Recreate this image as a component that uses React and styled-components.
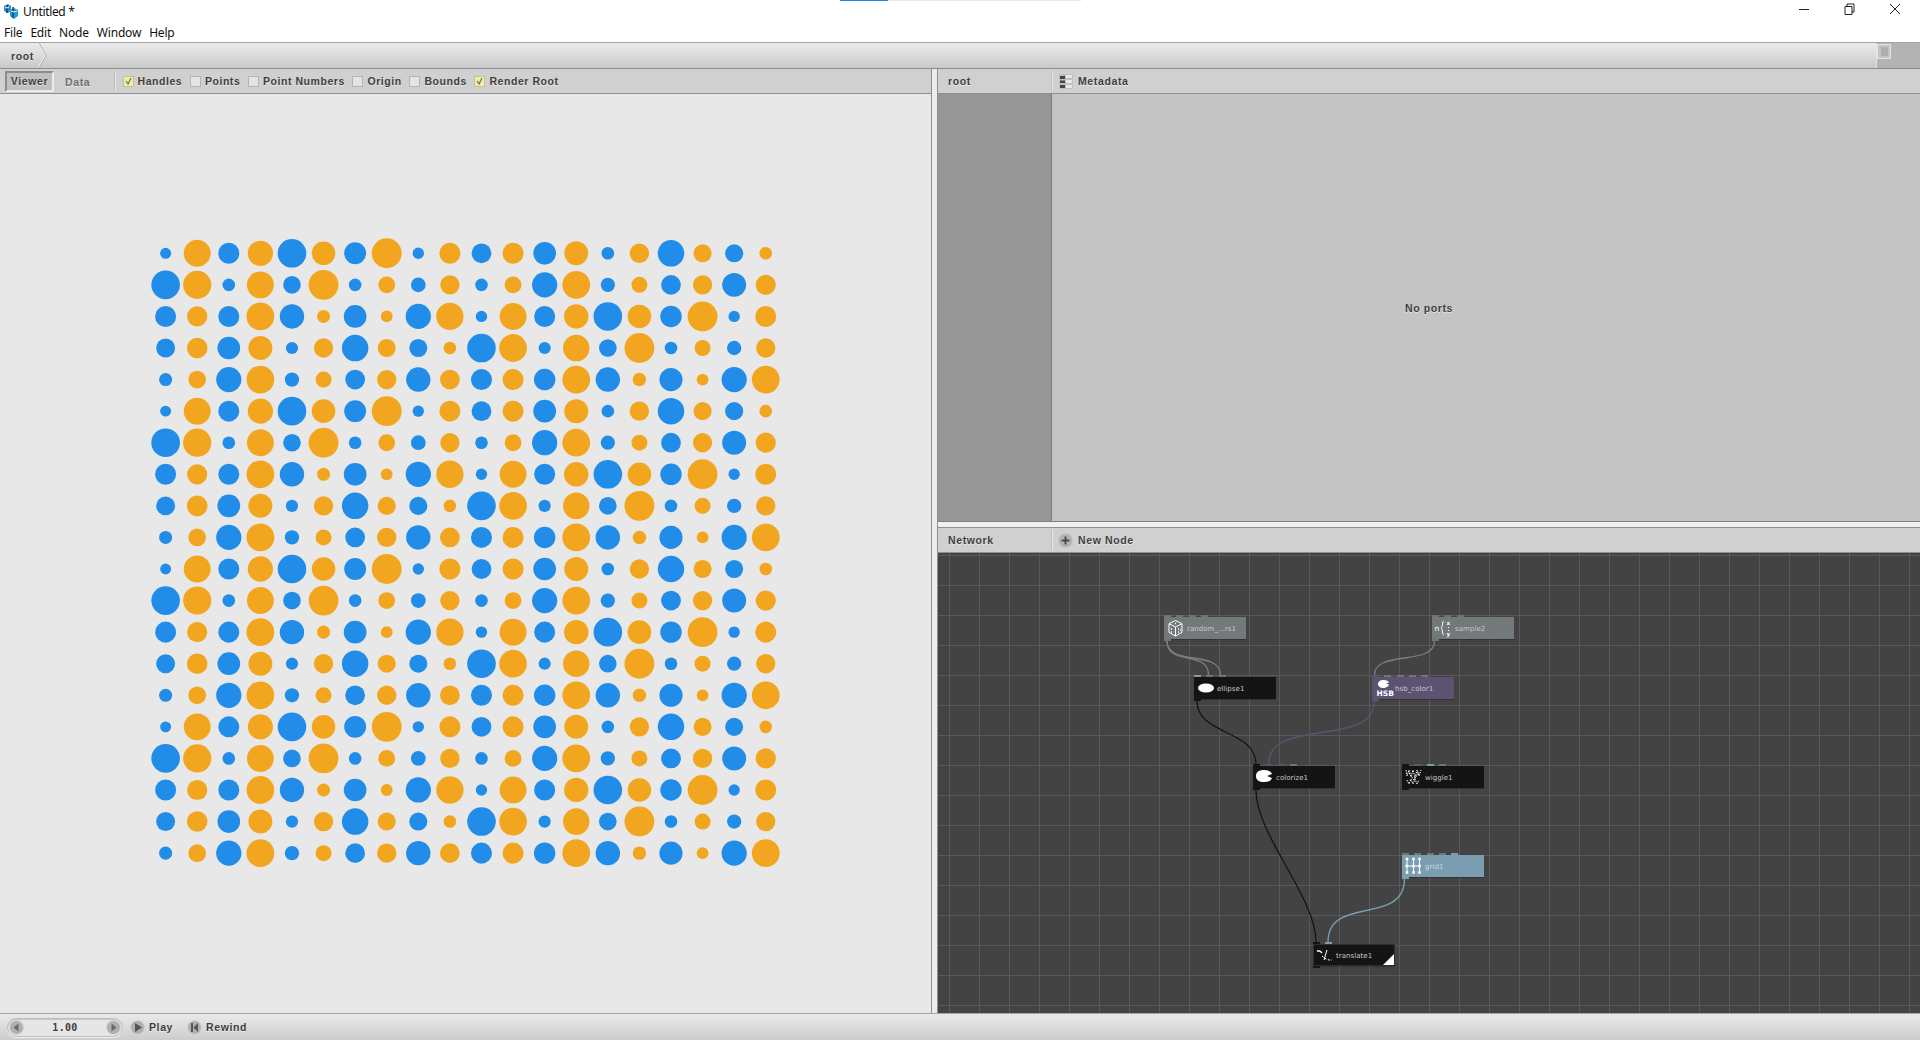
import React from "react";
import styled, { createGlobalStyle } from "styled-components";

const Global = createGlobalStyle`
  html, body { margin: 0; padding: 0; background: #fff; overflow: hidden; }
  #root { width: 1920px; height: 1040px; }
  * { box-sizing: border-box; }
`;

const UI = `"Liberation Sans", Arial, sans-serif`;
const BLUE = "#218de9";
const ORANGE = "#f2a620";

const Shell = styled.div`
  position: relative; width: 1920px; height: 1040px; display: flex; flex-direction: column;
  font-family: ${UI}; overflow: hidden;
`;
const LoadBar = styled.div`
  position: absolute; top: 0; left: 840px; width: 241px; height: 1px;
  background: linear-gradient(to right, #1e88e0 0 48px, #e8e8e8 48px);
`;
const TitleBar = styled.div`
  height: 22px; display: flex; align-items: center; background: #fff; padding-left: 3px; flex: none;
`;
const TitleText = styled.span`
  margin-left: 4px; font: 12px "Noto Sans", sans-serif; letter-spacing: -0.35px; color: #111;
`;
const WinButtons = styled.div`
  margin-left: auto; display: flex; align-items: center; padding-right: 3px; height: 21px; margin-top: -4px;
`;
const WinButton = styled.svg`
  width: 45px; height: 12px; display: block;
`;
const MenuBar = styled.div`
  height: 20px; display: flex; align-items: center; gap: 8px; background: #fff; padding: 1px 0 0 4px; flex: none;
`;
const MenuItem = styled.span`
  font: 12px "Noto Sans", sans-serif; letter-spacing: -0.2px; color: #111;
`;
const Breadcrumb = styled.div`
  height: 27px; flex: none; display: flex; align-items: center; padding-left: 11px;
  border-top: 1px solid #a3a3a3; border-bottom: 1px solid #8c8c8c;
  background: linear-gradient(#ebebeb, #c9c9c9);
  position: relative;
`;
const Label = styled.span`
  font: bold 10.5px ${UI}; letter-spacing: 0.62px; color: ${p => p.$muted ? "#67707a" : "#3f3f3f"};
  text-shadow: 0 1px 0 rgba(255,255,255,.55); white-space: nowrap;
`;
const CheckLabel = styled(Label)`
  letter-spacing: 0.55px;
`;
const Chevron = styled.svg`
  width: 10px; height: 25px; margin-left: 4px; display: block;
`;
const ScrollArea = styled.div`
  margin-left: auto; width: 44px; height: 25px; background: #b3b3b3; border-left: 1px solid #e4e4e4;
`;
const ScrollThumb = styled.div`
  width: 14px; height: 15px; background: #c4c4c4; border: 1px solid #e4e4e4;
  display: flex; align-items: center; justify-content: center; margin-top: 1px;
  &::after { content: ""; width: 7px; height: 9px; background: #afafaf; }
`;
const Body = styled.div`
  flex: 1; display: flex; min-height: 0;
`;
const LeftPane = styled.div`
  width: 932px; flex: none; display: flex; flex-direction: column; border-right: 1px solid #8f8f8f;
`;
const Divider = styled.div`
  width: 5px; flex: none; background: #ececec;
`;
const RightPane = styled.div`
  flex: 1; min-width: 0; display: flex; flex-direction: column; border-left: 1px solid #8f8f8f;
`;
const Toolbar = styled.div`
  height: 25px; flex: none; display: flex; align-items: center; background: #d0d0d0;
  border-bottom: 1px solid #8f8f8f;
`;
const ViewerTab = styled.div`
  margin-left: 5px; width: 49px; height: 21px; display: flex; align-items: center; justify-content: center;
  background: #c0c0c0; border: 2px solid; border-color: #8c8c8c #ececec #ececec #8c8c8c;
`;
const DataTab = styled.div`
  margin-left: 11px; width: 50px;
`;
const VSep = styled.div`
  width: 1px; height: 20px; background: #e8e8e8; box-shadow: -1px 0 0 #bdbdbd; flex: none;
`;
const CheckItem = styled.div`
  display: flex; align-items: center; gap: 4px; margin-left: ${p => p.$ml}px;
`;
const Box = styled.div`
  width: 11px; height: 11px; flex: none; border: 1px solid ${p => p.$on ? "#c2c28a" : "#b4b4b4"};
  background: ${p => p.$on ? "#eeeeaa" : "#e4e4e4"}; display: flex; align-items: center; justify-content: center;
`;
const Viewer = styled.div`
  flex: 1; background: #e8e8e8; min-height: 0;
`;
const DotsSvg = styled.svg`
  display: block; width: 100%; height: 100%;
`;
const PanelHeaderCell = styled.div`
  width: 114px; height: 100%; flex: none; padding-left: 10px; display: flex; align-items: center;
`;
const HeaderSep = styled(VSep)``;
const MetaIcon = styled.svg`
  width: 14px; height: 15px; margin-left: 6px; margin-right: 5px; display: block;
`;
const AddIcon = styled.svg`
  width: 15px; height: 15px; margin-left: 5px; margin-right: 5px; display: block;
`;
const PortsRow = styled.div`
  height: 428px; flex: none; display: flex; border-bottom: 1px solid #808080;
`;
const PortsSide = styled.div`
  width: 114px; flex: none; background: #969696; border-right: 1px solid #7d7d7d;
`;
const PortsMain = styled.div`
  flex: 1; background: #c4c4c4; display: flex; align-items: center; justify-content: center; padding-right: 114px;
`;
const Gutter = styled.div`
  height: 5px; flex: none; background: #f0f0f0; border-bottom: 1px solid #8f8f8f; box-sizing: content-box;
`;
const Canvas = styled.div`
  flex: 1; position: relative; min-height: 0; overflow: hidden; background-color: #434343;
  background-image: linear-gradient(to right, #595959 1px, transparent 1px), linear-gradient(to bottom, #595959 1px, transparent 1px);
  background-size: 30px 30px; background-position: 11px 2px;
`;
const Wires = styled.svg`
  position: absolute; inset: 0; width: 100%; height: 100%; pointer-events: none;
`;
const Node = styled.div`
  position: absolute; left: ${p => p.$x - 938}px; top: ${p => p.$y - 554}px; width: 82px; height: 22px;
  background: ${p => p.$bg}; box-shadow: 0 1px 0 rgba(0,0,0,.25); display: flex; align-items: center; padding: 1px 0 0 23px;
  ${p => p.$outlined ? "outline: 1px solid #2f2f2f; outline-offset: -1px;" : ""}
`;
const NodeName = styled.span`
  font: 7px "DejaVu Sans", sans-serif; color: ${p => p.$c || "#c8c8c8"}; white-space: nowrap; letter-spacing: 0.05px;
`;
const NodeIcon = styled.svg`
  position: absolute; left: 2px; top: 1px; width: 20px; height: 20px; display: block;
`;
const Ports = styled.div`
  position: absolute; left: 0; top: -2px; height: 2px; display: flex; gap: 5.3px;
`;
const Port = styled.div`
  width: 7px; height: 2px; background: ${p => p.$c};
`;
const Output = styled.div`
  position: absolute; left: 0; bottom: -2px; width: 7px; height: 2px; background: ${p => p.$c};
`;
const Corner = styled.div`
  position: absolute; right: 1px; bottom: 1px; width: 0; height: 0; border-style: solid;
  border-width: 0 0 11px 11px; border-color: transparent transparent #fff transparent;
`;
const StatusBar = styled.div`
  height: 27px; flex: none; display: flex; align-items: center; padding-left: 7px;
  border-top: 1px solid #a3a3a3; background: linear-gradient(#e9e9e9, #cdcdcd);
`;
const Spinner = styled.div`
  width: 116px; height: 19px; border-radius: 10px; display: flex; align-items: center; justify-content: space-between; padding: 0 1px;
  background: #e6e6e6; border: 1px solid #bcbcbc; box-shadow: inset 0 1px 0 #c9c9c9, 0 1px 0 #f2f2f2;
`;
const SpinValue = styled.span`
  font: bold 10px "DejaVu Sans Mono", monospace; letter-spacing: 0.3px; color: #3f3f3f;
`;
const RoundIcon = styled.svg`
  width: 15px; height: 15px; display: block; flex: none; margin-left: ${p => p.$ml || 0}px;
`;
const BarLabel = styled(Label)`
  margin-left: 4px;
`;

const ROWS = [
  [26,64,50,60,68,56,52,71,27,50,47,50,54,57,30,46,63,43,43,30],
  [68,67,30,64,42,71,30,40,35,46,30,40,60,66,34,38,47,46,57,48],
  [50,48,50,66,58,31,54,28,60,65,27,64,50,58,68,56,51,71,27,50],
  [45,49,54,57,29,46,63,43,43,30,68,66,29,63,42,71,30,38,34,46],
  [31,42,60,66,34,38,47,46,58,47,50,50,51,66,58,32,55,28,60,66],
];

const Dots = () => {
  const out = [];
  for (let r = 0; r < 20; r++) {
    for (let c = 0; c < 20; c++) {
      out.push(
        <circle key={`${r}-${c}`} cx={165.8 + c * 31.62} cy={253.3 + r * 31.57}
          r={ROWS[r % 5][c] / 2.376 / 2} fill={c % 2 ? ORANGE : BLUE} />
      );
    }
  }
  return <DotsSvg viewBox="0 94 932 919" preserveAspectRatio="none">{out}</DotsSvg>;
};

const CHECKS = [
  ["Handles", true, 6.5], ["Points", false, 7.7], ["Point Numbers", false, 7.7],
  ["Origin", false, 7.7], ["Bounds", false, 7.7], ["Render Root", true, 7.7],
];

const Round = ({ kind, ml }) => (
  <RoundIcon viewBox="0 0 15 15" $ml={ml}>
    <circle cx="7.5" cy="7.5" r="7" fill="#b0b0b0" stroke="#d8d8d8" />
    {kind === "left" && <path d="M9.5 3.5v8l-5-4z" fill="#6a6a6a" />}
    {kind === "right" && <path d="M5.5 3.5v8l5-4z" fill="#6a6a6a" />}
    {kind === "play" && <path d="M5 3v9l7-4.5z" fill="#555" />}
    {kind === "rewind" && <path d="M4 3h2v9H4zM11 3v9L6.5 7.500z" fill="#555" />}
  </RoundIcon>
);

const W = "#fff";
const ICONS = {
  dice: (
    <g fill="none" stroke={W} strokeWidth="1">
      <path d="M9.500 2.500l6.500 3.200v8.600l-6.500 3.700-6.500-3.700v-8.600zM3 5.700l6.500 3.300 6.500-3.300M9.500 9v9" />
      <path d="M5 11h1M5 14h1M12 11h1M9 5.500h1M12 14h1M14 12h1" strokeWidth="1.300" />
    </g>
  ),
  ellipse: <ellipse cx="10" cy="10" rx="8" ry="4.500" fill={W} />,
  sample: null,
  hsb: <path d="M9.500 2c3 0 5 1 5.500 2.500l-3 1 3 1c-.5 2-3 3.500-5.500 3.500-3 0-5.500-1.500-5.500-4s2.500-4 5.500-4z" fill={W} />,
  colorize: <path d="M9 3c4 0 7 1.500 8 4l-5 2 5 2c-1 3-4 4-8 4-5 0-8-2-8-6s3-6 8-6z" fill={W} />,
  wiggle: (
    <g fill="none" stroke={W} strokeWidth="1" strokeDasharray="1.500 1">
      <path d="M2 3l1 6 2-6 2 7 2-7 2 8 2-8 2 6 2-6" />
      <path d="M3 13l2 4 2-5 2 5 2-5 2 5 2-4" />
      <path d="M5 6l5 7 5-8" />
    </g>
  ),
  grid: (
    <g>
      <path d="M3 3v14M9.500 3v14M15.500 3v14M1 10h16" stroke={W} strokeWidth="1" />
      {[3,9.500,15.500].flatMap(x => [3,10,16.500].map(y => <rect key={`${x}${y}`} x={x-1.250} y={y-1.250} width="2.500" height="2.500" fill={W} />))}
    </g>
  ),
  translate: (
    <g fill="none" stroke={W}>
      <path d="M2 6h3M5 6l2 2" strokeWidth="1.500" />
      <path d="M12 5l-3 10" strokeWidth="1" />
      <path d="M7 11l4 3 3 1h3" strokeWidth="1" strokeDasharray="2 1.500" />
    </g>
  ),
};

const G = "#6e7376", K = "#141414", B = "#7a9db2", P = "#5c5373", D = "#5e5e5e", L = "#747474";

const NODES = [
  { x: 1164, y: 618, bg: "#73787b", name: "random_...rs1", icon: "dice", ports: [G,G,G,G], out: G },
  { x: 1194, y: 678, bg: K, name: "ellipse1", icon: "ellipse", ports: [B,L,L], out: K },
  { x: 1432, y: 618, bg: "#73787b", name: "sample2", icon: "sample", ports: [G,G,G], out: G },
  { x: 1372, y: 678, bg: P, name: "hsb_color1", icon: "hsb", ports: [P,L,L,L,L], out: P, hsb: true },
  { x: 1253, y: 767, bg: K, name: "colorize1", icon: "colorize", ports: [K,P,P,L], out: K },
  { x: 1402, y: 767, bg: K, name: "wiggle1", icon: "wiggle", ports: [K,D,B,L], out: K },
  { x: 1402, y: 856, bg: B, name: "grid1", icon: "grid", ports: [L,L,L,L,B], out: B, c: "#d0dbe2" },
  { x: 1313, y: 945, bg: K, name: "translate1", icon: "translate", ports: [K,B], out: K, corner: true },
];

const ox = 938, oy = 554;
const wire = (x1, y1, x2, y2, f) => {
  const k = Math.abs(y2 - y1) * f;
  return `M${x1 - ox} ${y1 - oy}C${x1 - ox} ${y1 - oy + k} ${x2 - ox} ${y2 - oy - k} ${x2 - ox} ${y2 - oy}`;
};
const WIRES = [
  [1167, 642, 1208.500, 676, "#7b8083", 0.75], [1167, 642, 1220.500, 676, "#7b8083", 0.75],
  [1434.500, 642, 1374.500, 676, "#7b8083", 0.75],
  [1197, 702, 1256, 765, "#141414", 0.55], [1374.500, 702, 1268.500, 765, P, 0.75],
  [1256, 791, 1316, 943, "#141414", 0.3], [1404.500, 880, 1328, 943, B, 0.75],
];

const AppLogo = () => (
  <svg width="16" height="17" viewBox="0 0 16 17" style={{ display: "block" }}>
    <path d="M1 3l4-2 3 2v5l-3 2-4-2z" fill="#2f8fd0" />
    <path d="M7 7l4-2 4 2v6l-4 3-4-3z" fill="#1e9be0" />
    <path d="M4 2v8M10 4v11" stroke="#10405f" strokeWidth="1.500" />
    <path d="M2 4l2 1 2-1M8 8l3 1 3-1" stroke="#fff" strokeWidth="1" fill="none" />
  </svg>
);

const NodeBox = ({ n }) => (
  <Node $x={n.x} $y={n.y} $bg={n.bg} $outlined={n.corner}>
    <Ports>{n.ports.map((c, i) => <Port key={i} $c={c} />)}</Ports>
    <Output $c={n.out} />
    {n.icon === "sample" ? (
      <NodeIcon viewBox="0 0 20 20">
        <text x="0.500" y="12.500" fill={W} fontSize="7.500" fontFamily="DejaVu Sans">n</text>
        <path d="M10 3c-2 0-1 6-3 7 2 1 1 7 3 7" fill="none" stroke={W} strokeWidth="1" />
        <text x="12.500" y="7" fill={W} fontSize="5.500" fontWeight="bold" fontFamily="DejaVu Sans">x</text>
        <path d="M14.500 9v1M14.500 12v1" stroke={W} />
        <text x="12.500" y="18" fill={W} fontSize="5.500" fontWeight="bold" fontFamily="DejaVu Sans">y</text>
      </NodeIcon>
    ) : (
      <NodeIcon viewBox="0 0 20 20">
        {ICONS[n.icon]}
        {n.hsb && <text x="2.500" y="18" fill={W} fontSize="7.500" fontWeight="bold" fontFamily="DejaVu Sans">HSB</text>}
      </NodeIcon>
    )}
    <NodeName $c={n.c}>{n.name}</NodeName>
    {n.corner && <Corner />}
  </Node>
);

export default function App() {
  return (
    <Shell>
      <Global />
      <LoadBar />
      <TitleBar>
        <AppLogo />
        <TitleText>Untitled *</TitleText>
        <WinButtons>
          <WinButton viewBox="0 0 45 12"><path d="M17 6.500h10" stroke="#222" /></WinButton>
          <WinButton viewBox="0 0 45 12"><path d="M18 3.500h7v8h-7zM20 3.500v-2.500h7v8h-2" fill="none" stroke="#222" /></WinButton>
          <WinButton viewBox="0 0 45 12"><path d="M18 1l10 10M28 1L18 11" stroke="#222" /></WinButton>
        </WinButtons>
      </TitleBar>
      <MenuBar>
        {["File", "Edit", "Node", "Window", "Help"].map(m => <MenuItem key={m}>{m}</MenuItem>)}
      </MenuBar>
      <Breadcrumb>
        <Label>root</Label>
        <Chevron viewBox="0 0 10 25">
          <path d="M1 0l7 12.500L1 25" fill="none" stroke="#a8a8a8" />
          <path d="M0 0l7 12.500L0 25" fill="none" stroke="#f2f2f2" />
        </Chevron>
        <ScrollArea><ScrollThumb /></ScrollArea>
      </Breadcrumb>
      <Body>
        <LeftPane>
          <Toolbar>
            <ViewerTab><Label>Viewer</Label></ViewerTab>
            <DataTab><Label $muted>Data</Label></DataTab>
            <VSep />
            {CHECKS.map(([t, on, ml]) => (
              <CheckItem key={t} $ml={ml}>
                <Box $on={on}>
                  {on && <svg width="9" height="9" viewBox="0 0 9 9"><path d="M2 4l2 3 3-6" fill="none" stroke="#77775a" strokeWidth="1.300" /></svg>}
                </Box>
                <CheckLabel>{t}</CheckLabel>
              </CheckItem>
            ))}
          </Toolbar>
          <Viewer><Dots /></Viewer>
        </LeftPane>
        <Divider />
        <RightPane>
          <Toolbar>
            <PanelHeaderCell><Label>root</Label></PanelHeaderCell>
            <HeaderSep />
            <MetaIcon viewBox="0 0 14 15">
              <rect width="14" height="15" fill="#c0c0c0" />
              <path d="M1 2h5v3H1zM1 6.500h5v2.500H1zM1 11h5v3H1z" fill="#444" />
              <path d="M7 1h6v3H7zM7 6h6v3H7zM7 11h6v3H7z" fill="#e8e8e8" />
            </MetaIcon>
            <Label>Metadata</Label>
          </Toolbar>
          <PortsRow>
            <PortsSide />
            <PortsMain><Label>No ports</Label></PortsMain>
          </PortsRow>
          <Gutter />
          <Toolbar>
            <PanelHeaderCell><Label>Network</Label></PanelHeaderCell>
            <HeaderSep />
            <AddIcon viewBox="0 0 15 15">
              <circle cx="7.500" cy="7.500" r="7" fill="#b4b4b4" />
              <path d="M7.500 3.500v8M3.500 7.500h8" stroke="#4a4a4a" strokeWidth="2" />
            </AddIcon>
            <Label>New Node</Label>
          </Toolbar>
          <Canvas>
            <Wires>
              {WIRES.map(([a, b, c, d, col, f], i) => (
                <path key={i} d={wire(a, b, c, d, f)} fill="none" stroke={col} strokeWidth="1.300" />
              ))}
            </Wires>
            {NODES.map(n => <NodeBox key={n.name} n={n} />)}
          </Canvas>
        </RightPane>
      </Body>
      <StatusBar>
        <Spinner>
          <Round kind="left" />
          <SpinValue>1.00</SpinValue>
          <Round kind="right" />
        </Spinner>
        <Round kind="play" ml={7} />
        <BarLabel>Play</BarLabel>
        <Round kind="rewind" ml={14} />
        <BarLabel>Rewind</BarLabel>
      </StatusBar>
    </Shell>
  );
}
